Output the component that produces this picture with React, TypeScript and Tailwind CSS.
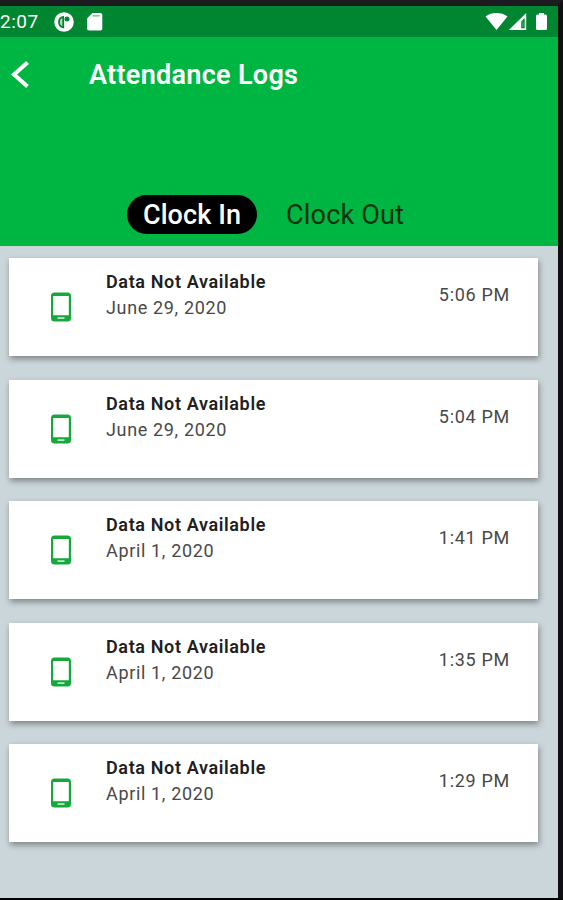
type Log = {
  title: string;
  date: string;
  time: string;
};

const logs: Log[] = [
  { title: 'Data Not Available', date: 'June 29, 2020', time: '5:06 PM' },
  { title: 'Data Not Available', date: 'June 29, 2020', time: '5:04 PM' },
  { title: 'Data Not Available', date: 'April 1, 2020', time: '1:41 PM' },
  { title: 'Data Not Available', date: 'April 1, 2020', time: '1:35 PM' },
  { title: 'Data Not Available', date: 'April 1, 2020', time: '1:29 PM' },
];

function PhoneIcon() {
  return (
    <svg width="22" height="30" viewBox="0 0 22 30" className="shrink-0">
      <path
        fill="#14a93a"
        fillRule="evenodd"
        d="M4.5 0.5h13a3.5 3.5 0 0 1 3.5 3.5v22a3.5 3.5 0 0 1-3.5 3.5h-13A3.5 3.5 0 0 1 1 26V4A3.5 3.5 0 0 1 4.5 0.5zM3.2 4v19.3h15.6V4z"
      />
      <rect x="7.5" y="25.2" width="7" height="1.8" fill="#b5e8c0" />
    </svg>
  );
}

function StatusBar() {
  return (
    <div className="flex h-[31px] items-center bg-[#008530] text-white">
      <span className="w-[54px] text-[19px] leading-none tracking-[0.5px]">2:07</span>
      <svg width="21" height="20" viewBox="0 0 21 20">
        <circle cx="10" cy="10" r="9.8" fill="#fff" />
        <path
          d="M9.2 4.8v10.6C6.3 15 5 12.9 5 10.1s1.3-4.9 4.2-5.3z"
          fill="#b9d8c3"
          stroke="#008530"
          strokeWidth="1.8"
        />
        <circle cx="13" cy="7" r="2.5" fill="#008530" />
      </svg>
      <svg width="18" height="20" viewBox="0 0 18 20" className="ml-[11px]">
        <path d="M6.4 1h8.1a1.8 1.8 0 0 1 1.8 1.8v13.7a2 2 0 0 1-2 2H3a2 2 0 0 1-2-2V6.4z" fill="#fff" />
        <path d="M6.8 3.8h6.8" stroke="#7fc297" strokeWidth="1.5" />
      </svg>
      <div className="ml-auto flex items-center pr-[10px]">
        <svg width="23" height="19" viewBox="0 0 23 19">
          <path d="M11.5 18L.5 4.5C6.5-.1 16.5-.1 22.5 4.5z" fill="#fff" />
        </svg>
        <svg width="19" height="19" viewBox="0 0 19 19">
          <path fillRule="evenodd" d="M18.2 1v17H.8zM16.7 6L13.2 9.5v6.8h3.5z" fill="#fff" />
          <path d="M15 9.5v5.5" stroke="#5fae7a" strokeWidth="1" />
        </svg>
        <svg width="13" height="19" viewBox="0 0 13 19" className="ml-[8px]">
          <path d="M4 1h5v1.6h1.5A1.5 1.5 0 0 1 12 4.1v12.4a1.5 1.5 0 0 1-1.5 1.5h-8A1.5 1.5 0 0 1 1 16.500V4.100a1.5 1.5 0 0 1 1.5-1.500H4z" fill="#fff" />
        </svg>
      </div>
    </div>
  );
}

function LogCard({ log }: { log: Log }) {
  return (
    <div className="flex h-[98px] bg-white shadow-[1px_3px_6px_rgba(0,0,0,0.38)]">
      <div className="flex w-[97px] items-center pl-[41px]">
        <PhoneIcon />
      </div>
      <div className="pt-[11px]">
        <div className="text-[18px] leading-[26px] font-semibold tracking-[0.63px] text-[#202020]">{log.title}</div>
        <div className="text-[18px] leading-[26px] tracking-[0.65px] text-[#484848]">{log.date}</div>
      </div>
      <div className="ml-auto pt-[24px] pr-[28px] text-[18px] leading-[26px] tracking-[0.7px] text-[#484848]">
        {log.time}
      </div>
    </div>
  );
}

export default function App() {
  return (
    <div className="h-[900px] w-[563px] overflow-hidden border-t-[6px] border-r-[5px] border-b-2 border-t-[#1c1c20] border-r-[#101012] border-b-black bg-[#cbd6da] font-['Roboto',sans-serif]">
      <StatusBar />
      <header className="flex h-[209px] flex-col justify-between bg-[#00b642]">
        <div className="flex items-center pt-[22px]">
          <svg width="32" height="30" viewBox="0 0 32 30" className="mr-[57px]">
            <path d="M27.5 2.5L14 14.5l13.5 12" fill="none" stroke="#fff" strokeWidth="4" />
          </svg>
          <h1 className="text-[27px] leading-[32px] font-semibold tracking-[0.3px] text-white">Attendance Logs</h1>
        </div>
        <div className="flex items-center pb-[12px] pl-[127px] text-[27px]">
          <button type="button" className="h-[39px] w-[130px] rounded-full bg-black leading-[41px] font-medium tracking-[0.1px] text-white">
            Clock In
          </button>
          <button type="button" className="ml-[29px] h-[39px] leading-[41px] tracking-[0.2px] text-[#06330f]">
            Clock Out
          </button>
        </div>
      </header>
      <main className="flex flex-col gap-[23.5px] pt-[12px] pr-[20px] pl-[9px]">
        {logs.map((log, i) => (
          <LogCard key={i} log={log} />
        ))}
      </main>
    </div>
  );
}
